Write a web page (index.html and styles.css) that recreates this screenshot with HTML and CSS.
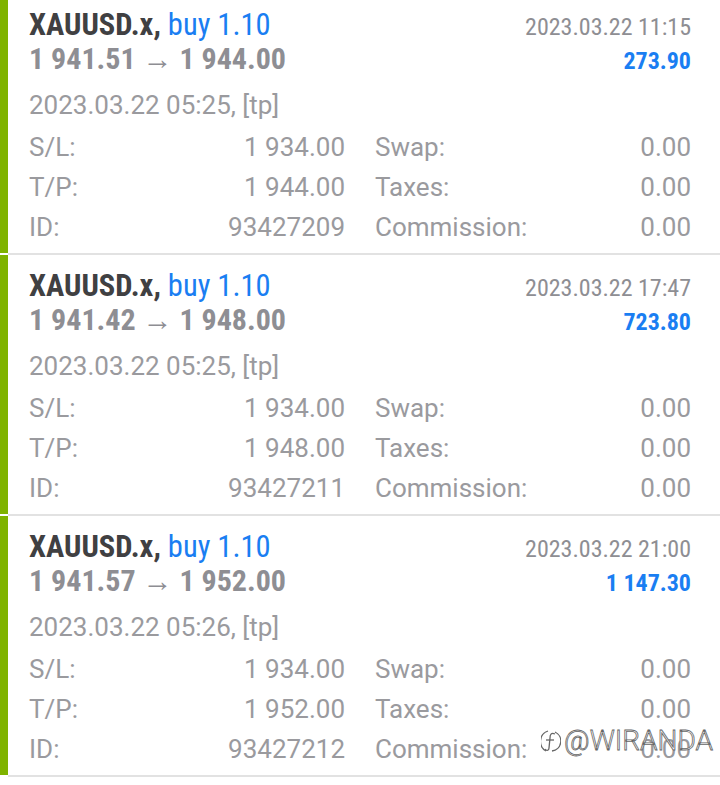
FILE: index.html
```html
<!DOCTYPE html>
<html>
<head>
<meta charset="utf-8">
<link rel="stylesheet" href="styles.css">
</head>
<body>
<div class="list">
  <div class="card">
    <div class="head">
      <div class="title"><span class="sym">XAUUSD.x,</span> <span class="side">buy 1.10</span></div>
      <div class="time">2023.03.22 11:15</div>
    </div>
    <div class="head">
      <div class="prices">1 941.51 → 1 944.00</div>
      <div class="profit">273.90</div>
    </div>
    <div class="open">2023.03.22 05:25, [tp]</div>
    <div class="grid">
      <div class="cell"><span>S/L:</span><span>1 934.00</span></div>
      <div class="cell"><span>Swap:</span><span>0.00</span></div>
      <div class="cell"><span>T/P:</span><span>1 944.00</span></div>
      <div class="cell"><span>Taxes:</span><span>0.00</span></div>
      <div class="cell"><span>ID:</span><span>93427209</span></div>
      <div class="cell"><span>Commission:</span><span>0.00</span></div>
    </div>
  </div>
  <div class="card">
    <div class="head">
      <div class="title"><span class="sym">XAUUSD.x,</span> <span class="side">buy 1.10</span></div>
      <div class="time">2023.03.22 17:47</div>
    </div>
    <div class="head">
      <div class="prices">1 941.42 → 1 948.00</div>
      <div class="profit">723.80</div>
    </div>
    <div class="open">2023.03.22 05:25, [tp]</div>
    <div class="grid">
      <div class="cell"><span>S/L:</span><span>1 934.00</span></div>
      <div class="cell"><span>Swap:</span><span>0.00</span></div>
      <div class="cell"><span>T/P:</span><span>1 948.00</span></div>
      <div class="cell"><span>Taxes:</span><span>0.00</span></div>
      <div class="cell"><span>ID:</span><span>93427211</span></div>
      <div class="cell"><span>Commission:</span><span>0.00</span></div>
    </div>
  </div>
  <div class="card">
    <div class="head">
      <div class="title"><span class="sym">XAUUSD.x,</span> <span class="side">buy 1.10</span></div>
      <div class="time">2023.03.22 21:00</div>
    </div>
    <div class="head">
      <div class="prices">1 941.57 → 1 952.00</div>
      <div class="profit">1 147.30</div>
    </div>
    <div class="open">2023.03.22 05:26, [tp]</div>
    <div class="grid">
      <div class="cell"><span>S/L:</span><span>1 934.00</span></div>
      <div class="cell"><span>Swap:</span><span>0.00</span></div>
      <div class="cell"><span>T/P:</span><span>1 952.00</span></div>
      <div class="cell"><span>Taxes:</span><span>0.00</span></div>
      <div class="cell"><span>ID:</span><span>93427212</span></div>
      <div class="cell"><span>Commission:</span><span>0.00</span></div>
    </div>
    <div class="watermark">
      <svg class="wm-icon" width="20" height="26" viewBox="0 0 20 26">
        <path d="M7 3 A11 11 0 0 0 5 23" fill="none" stroke="#666" stroke-width="1.3"/>
        <path d="M14 4 A10 10 0 0 1 11 23" fill="none" stroke="#666" stroke-width="1.3"/>
        <path d="M14 6 C10 4 9 7 9 10 L8 20 C8 23 5 23 4 21" fill="none" stroke="#666" stroke-width="1.3"/>
        <path d="M5 12 L13 12" fill="none" stroke="#666" stroke-width="1.3"/>
      </svg>
      <span class="wm-text">@WIRANDA</span>
    </div>
  </div>
</div>
</body>
</html>
```
FILE: styles.css
```css
html, body {
  margin: 0;
  padding: 0;
  background: #fff;
  font-family: Roboto, "Noto Sans", sans-serif;
}
.list {
  margin-top: -6px;
}
.card {
  position: relative;
  height: 259px;
  border-left: 8px solid #7fb300;
  padding: 0 29px 0 21px;
  box-sizing: border-box;
  margin-bottom: 2px;
}
.card::after {
  content: "";
  position: absolute;
  left: 0;
  right: 0;
  bottom: -2px;
  height: 2px;
  background: #e2e2e2;
}
.head {
  display: flex;
  justify-content: space-between;
  align-items: baseline;
}
.head:first-child {
  padding-top: 14px;
}
.title {
  font-size: 30.5px;
  font-stretch: condensed;
  line-height: 34px;
}
.sym {
  font-weight: 700;
  color: #404042;
}
.side {
  color: #1a7ef2;
}
.time {
  font-size: 24px;
  font-stretch: condensed;
  color: #8e8e93;
}
.prices {
  font-size: 30px;
  font-weight: 700;
  font-stretch: condensed;
  color: #8e8e93;
  line-height: 34px;
}
.profit {
  font-size: 24px;
  font-weight: 700;
  font-stretch: condensed;
  color: #1a7ef2;
}
.open {
  font-size: 26px;
  color: #9a9a9e;
  margin-top: 14px;
  line-height: 30px;
}
.grid {
  display: grid;
  grid-template-columns: 1fr 1fr;
  column-gap: 30px;
  row-gap: 10px;
  margin-top: 12px;
  font-size: 26px;
  line-height: 30px;
  color: #9a9a9e;
}
.cell {
  display: flex;
  justify-content: space-between;
}
.watermark {
  position: absolute;
  right: 7px;
  bottom: 18px;
  display: flex;
  align-items: center;
  gap: 3px;
}
.wm-text {
  font-size: 28px;
  font-weight: 300;
  color: #fff;
  -webkit-text-stroke: 0.8px #666;
}
```
